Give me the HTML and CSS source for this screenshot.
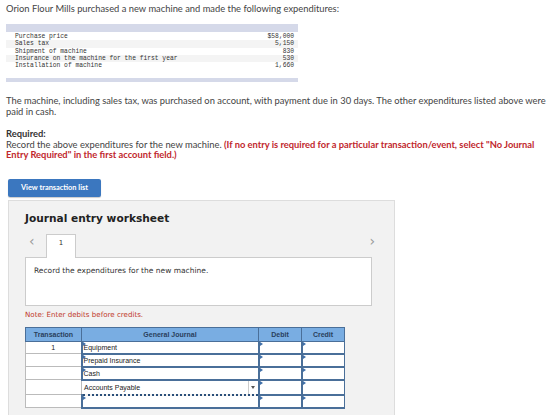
FILE: index.html
```html
<!DOCTYPE html>
<html lang="en">
  <head>
    <meta charset="UTF-8" />
    <title>Journal entry</title>
    <link rel="stylesheet" href="styles.css">
  </head>

  <body>
    <div class="question">
      <p class="intro">Orion Flour Mills purchased a new machine and made the following expenditures:</p>

      <div class="costsWrap">
        <table class="costs">
          <tr><td>Purchase price</td><td class="amt">$58,000</td></tr>
          <tr class="odd"><td>Sales tax</td><td class="amt">5,150</td></tr>
          <tr><td>Shipment of machine</td><td class="amt">830</td></tr>
          <tr class="odd"><td>Insurance on the machine for the first year</td><td class="amt">530</td></tr>
          <tr><td>Installation of machine</td><td class="amt">1,660</td></tr>
        </table>
      </div>

      <p class="text">The machine, including sales tax, was purchased on account, with payment due in 30 days. The other expenditures listed above were paid in cash.</p>

      <p class="text req"><b>Required:</b><br>
        Record the above expenditures for the new machine. <span class="warn">(If no entry is required for a particular transaction/event, select "No Journal Entry Required" in the first account field.)</span></p>

      <div class="btnRow"><span class="btnView">View transaction list</span></div>

      <div class="worksheet">
        <div class="wsTitle">Journal entry worksheet</div>
        <div class="tabs">
          <span class="arrow">&lsaquo;</span>
          <span class="tab">1</span>
          <span class="arrow next">&rsaquo;</span>
        </div>
        <div class="tabBody">Record the expenditures for the new machine.</div>
        <div class="note">Note: Enter debits before credits.</div>

        <table class="journal">
          <tr>
            <th class="cTrans">Transaction</th>
            <th class="cAcct">General Journal</th>
            <th class="cNum">Debit</th>
            <th class="cNum">Credit</th>
          </tr>
          <tr>
            <td class="trans">1</td>
            <td class="inp"><span class="mark"></span>Equipment</td>
            <td class="inp"><span class="mark"></span></td>
            <td class="inp"><span class="mark"></span></td>
          </tr>
          <tr>
            <td class="trans"></td>
            <td class="inp"><span class="mark"></span>Prepaid Insurance</td>
            <td class="inp"><span class="mark"></span></td>
            <td class="inp"><span class="mark"></span></td>
          </tr>
          <tr>
            <td class="trans"></td>
            <td class="inp"><span class="mark"></span>Cash</td>
            <td class="inp"><span class="mark"></span></td>
            <td class="inp"><span class="mark"></span></td>
          </tr>
          <tr class="tall">
            <td class="trans"></td>
            <td class="inp focus">Accounts Payable<span class="drop"></span></td>
            <td class="inp"><span class="mark"></span></td>
            <td class="inp"><span class="mark"></span></td>
          </tr>
          <tr>
            <td class="trans"></td>
            <td class="inp"><span class="mark"></span></td>
            <td class="inp"><span class="mark"></span></td>
            <td class="inp"><span class="mark"></span></td>
          </tr>
        </table>
      </div>
    </div>
  </body>
</html>
```

FILE: styles.css
```css
body {
  margin: 0;
  padding: 0;
  font-family: Lato, "Open Sans", sans-serif;
  color: #444444;
  background: #ffffff;
}

p {
  margin: 0;
}

.question {
  padding: 3px 6px 0 6px;
  overflow: hidden;
  height: 412px;
}

.intro {
  font-size: 9.35px;
  line-height: 12px;
}

/* expenditures list, framed by a top and bottom band */
.costsWrap {
  width: 292px;
  margin-top: 9px;
  padding: 1px 0 9px 0;
  border-top: 8px solid #d5d9e9;
  border-bottom: 4px solid #d5d9e9;
}

.costs {
  width: 100%;
  border-collapse: collapse;
  font-family: "Liberation Mono", monospace;
  font-size: 6.3px;
  color: #333333;
}

.costs td {
  height: 7.3px;
  line-height: 7px;
  padding: 0 4px 0 9px;
  white-space: nowrap;
}

.costs .odd td {
  background: #f4f4f4;
}

.costs .amt {
  text-align: right;
}

.text {
  font-size: 9.35px;
  line-height: 11px;
  margin-top: 13px;
}

.req {
  margin-top: 12px;
  line-height: 10.5px;
}

.req b {
  color: #333333;
}

.warn {
  color: #c1272d;
  font-weight: bold;
}

.btnRow {
  margin-top: 13px;
  padding-left: 2px;
  height: 18px;
}

.btnView {
  display: inline-block;
  width: 93px;
  height: 18px;
  line-height: 18px;
  text-align: center;
  background: #3b77bf;
  color: #ffffff;
  font-size: 7.4px;
  font-weight: bold;
  border-radius: 2px;
  box-shadow: 0 1px 1px rgba(0, 0, 0, 0.2);
}

/* worksheet panel */
.worksheet {
  width: 361px;
  margin: 8px 0 0 2px;
  padding: 0 8px 0 16px;
  height: 220px;
  background: #f2f2f2;
  border: 1px solid #dddddd;
  border-bottom: none;
  font-family: "DejaVu Sans", Verdana, sans-serif;
}

.wsTitle {
  margin-top: 10px;
  font-size: 10.6px;
  font-weight: bold;
  color: #222222;
  line-height: 14px;
}

.tabs {
  display: flex;
  align-items: flex-end;
  height: 24px;
  margin-top: 8px;
  width: 350px;
}

.arrow {
  font-size: 14px;
  color: #9a9a9a;
  width: 17px;
  padding-left: 4px;
  line-height: 20px;
  align-self: flex-start;
  margin-top: -2px;
}

.arrow.next {
  margin-left: auto;
  width: auto;
}

.tab {
  width: 28px;
  height: 23px;
  background: #ffffff;
  border: 1px solid #cccccc;
  border-bottom: none;
  font-size: 7px;
  color: #333333;
  text-align: center;
  line-height: 16px;
  margin-bottom: -1px;
  position: relative;
  z-index: 1;
}

.tabBody {
  width: 337px;
  height: 39px;
  padding: 8px 0 0 8px;
  background: #ffffff;
  border: 1px solid #cccccc;
  font-size: 7.5px;
  color: #333333;
  line-height: 9px;
}

.note {
  margin-top: 4px;
  font-size: 7.1px;
  color: #c0392b;
  line-height: 9px;
}

/* journal grid */
.journal {
  margin-top: 8px;
  border-collapse: collapse;
  font-family: "Liberation Sans", Arial, sans-serif;
  font-size: 7px;
  color: #222222;
}

.journal th {
  height: 13px;
  padding: 0;
  background: #79ade2;
  border: 1px solid #4a6f99;
  font-weight: bold;
  color: #2a3f5c;
}

.cTrans {
  width: 55px;
}

.cAcct {
  width: 176px;
}

.cNum {
  width: 42px;
}

.journal td {
  height: 11px;
  padding: 0;
  background: #ffffff;
}

.journal .tall td {
  height: 13px;
}

.journal .trans {
  text-align: center;
  border: 1px solid #bbbbbb;
}

.journal .inp {
  position: relative;
  border: 1px solid #4a6f99;
  border-left-width: 2px;
  border-bottom-width: 2px;
  padding-left: 1px;
  line-height: 11px;
}

.journal .focus {
  border: 1px dotted #2a4f7a;
  border-bottom: 2px dotted #2a4f7a;
  padding-left: 2px;
}

.mark {
  position: absolute;
  left: 0;
  top: 0;
  width: 0;
  height: 0;
  border-top: 2px solid transparent;
  border-bottom: 2px solid transparent;
  border-left: 3px solid #3f6fa8;
}

.drop {
  position: absolute;
  right: 0;
  top: 0;
  width: 9px;
  height: 100%;
  border-left: 1px solid #cccccc;
}

.drop::after {
  content: "";
  position: absolute;
  left: 2px;
  top: 5px;
  border-left: 2.5px solid transparent;
  border-right: 2.5px solid transparent;
  border-top: 3px solid #555555;
}
```
